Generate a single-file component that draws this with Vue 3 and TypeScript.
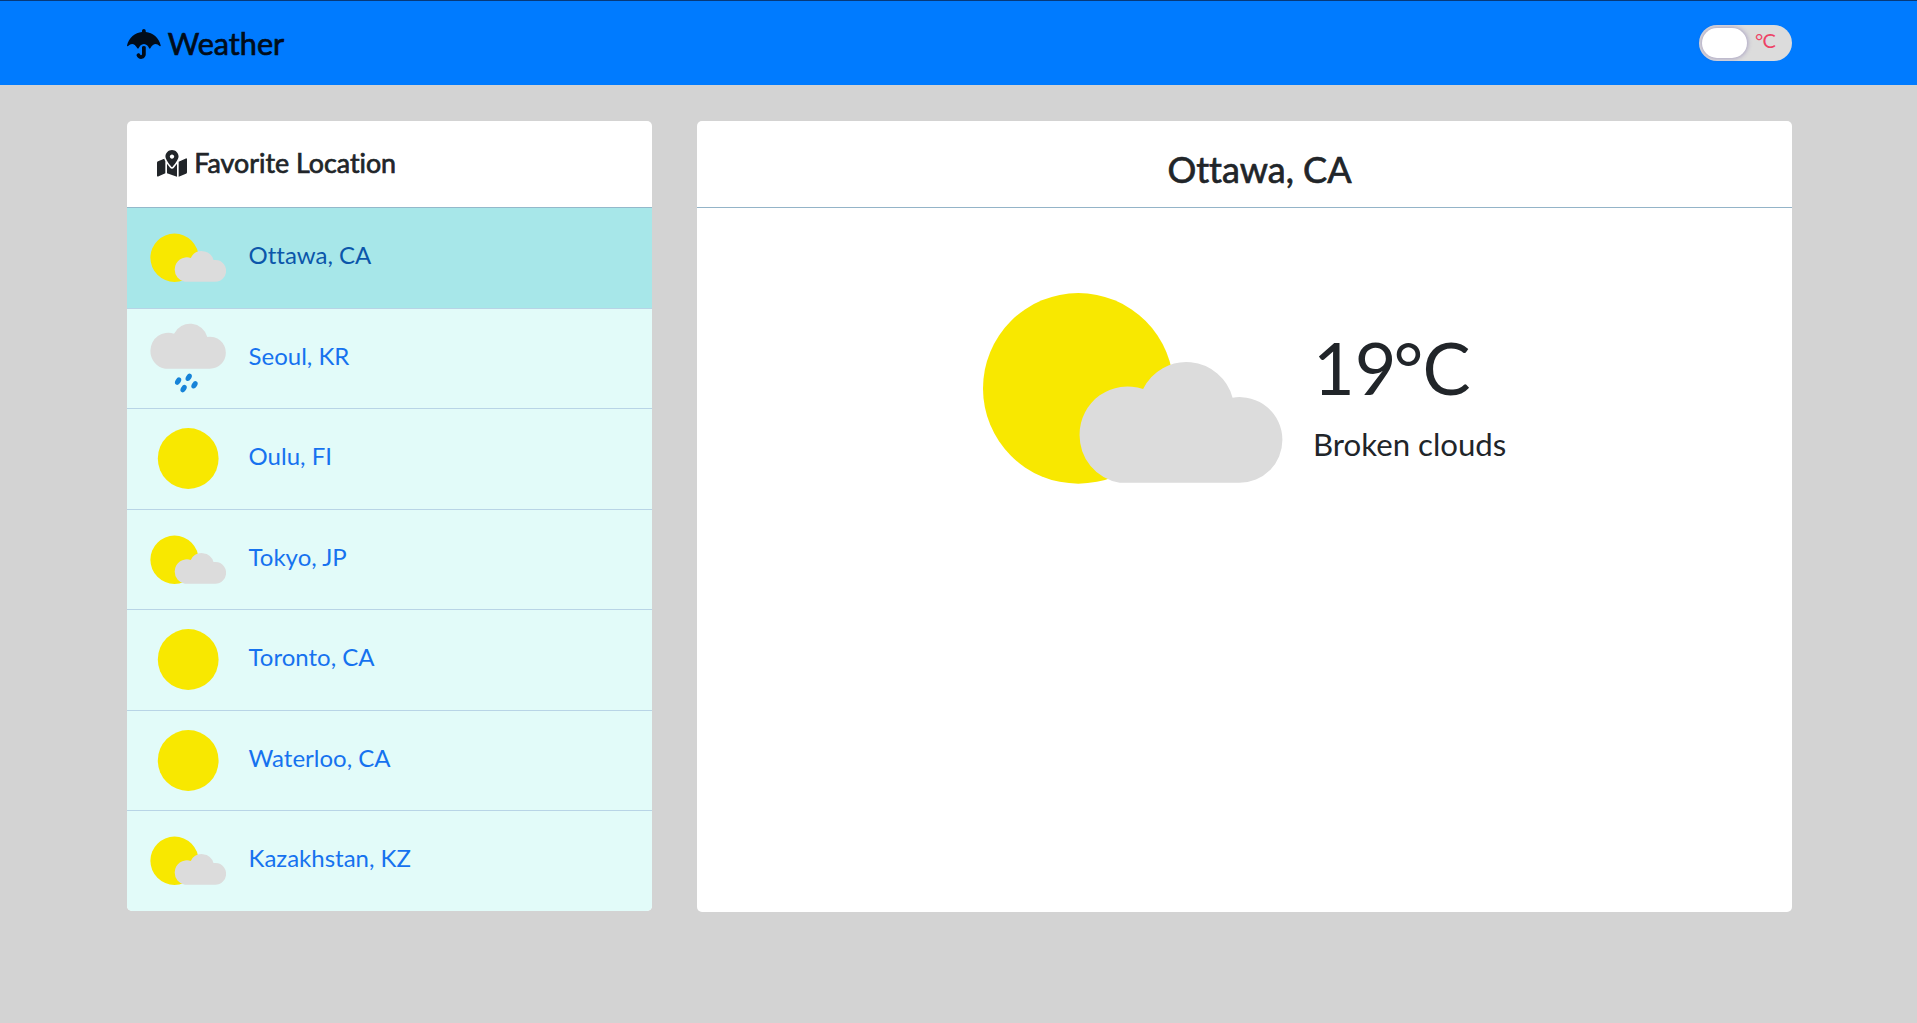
<script setup lang="ts">
type Weather = 'partly' | 'rain' | 'sun'

interface City {
  name: string
  weather: Weather
}

const cities: City[] = [
  { name: 'Ottawa, CA', weather: 'partly' },
  { name: 'Seoul, KR', weather: 'rain' },
  { name: 'Oulu, FI', weather: 'sun' },
  { name: 'Tokyo, JP', weather: 'partly' },
  { name: 'Toronto, CA', weather: 'sun' },
  { name: 'Waterloo, CA', weather: 'sun' },
  { name: 'Kazakhstan, KZ', weather: 'partly' },
]

const selected = cities[0]

// Cloud silhouette in a 203 x 121 box
const cloud =
  'M40 120.5A48 48 0 0 1 0 72A48 48 0 0 1 63.5 26.7A48 48 0 0 1 153 35.4A42.8 42.8 0 0 1 202.8 77.8A42.8 42.8 0 0 1 160 120.5H40Z'
</script>

<template>
  <div class="page">
    <header class="navbar">
      <div class="container bar">
        <h1 class="brand">
          <svg class="umbrella" viewBox="0 0 576 512">
            <path
              d="M575.7 280.8C547.1 144.5 437.3 62.6 320 49.9V32c0-17.7-14.3-32-32-32s-32 14.3-32 32v17.9C138.3 62.6 29.5 144.5.3 280.8c-2.2 10.1 8.5 21.3 18.7 11.4 52-55 107.7-52.4 158.6 37 5.3 9.5 14.9 8.6 19.7 0 20.2-35.4 44.9-73.2 90.7-73.2 58.5 0 88.2 68.8 90.7 73.2 4.8 8.6 14.4 9.5 19.7 0 51-89.5 107.1-91.4 158.6-37 10.3 10 20.9-1.3 18.7-11.4zM256 301.7V432c0 8.8-7.2 16-16 16-7.8 0-13.2-5.3-15.1-10.7-5.9-16.7-24.1-25.4-40.8-19.5-16.7 5.9-25.4 24.2-19.5 40.8 11.2 31.9 41.6 53.3 75.4 53.3 44.1 0 80-35.9 80-80V301.6c-9.1-7.9-19.8-13.6-32-13.6-12.3.1-22.4 4.8-32 13.7z"
            />
          </svg>
          <span>Weather</span>
        </h1>
        <button class="toggle" type="button">
          <span class="knob"></span>
          <span class="unit">°C</span>
        </button>
      </div>
    </header>

    <main class="container content">
      <section class="favorites">
        <h2 class="favorites-title">
          <svg class="map" viewBox="0 0 576 512">
            <path
              d="M288 0c-69.59 0-126 56.41-126 126 0 56.26 82.35 158.8 113.9 196.02 6.39 7.54 17.82 7.54 24.2 0C331.65 284.8 414 182.26 414 126 414 56.41 357.59 0 288 0zm0 168c-23.2 0-42-18.8-42-42s18.8-42 42-42 42 18.8 42 42-18.8 42-42 42zM20.12 215.95A32.006 32.006 0 0 0 0 245.66v250.32c0 11.32 11.43 19.06 21.94 14.86L160 448V214.92c-8.84-15.98-16.07-31.54-21.25-46.42L20.12 215.95zM288 359.67c-14.07 0-27.38-6.18-36.51-16.96-19.66-23.2-40.57-49.62-59.49-76.72v182l192 64V266c-18.92 27.09-39.82 53.52-59.49 76.72-9.13 10.77-22.44 16.95-36.51 16.95zm266.06-198.51L416 224v288l139.88-55.95A31.996 31.996 0 0 0 576 426.34V176.02c0-11.32-11.43-19.06-21.94-14.86z"
            />
          </svg>
          <span>Favorite Location</span>
        </h2>
        <ul class="list">
          <li
            v-for="city in cities"
            :key="city.name"
            class="row"
            :class="{ active: city === selected }"
          >
            <svg v-if="city.weather === 'partly'" class="icon" viewBox="0 0 300 300">
              <circle class="sun" cx="96.8" cy="149" r="95.3" />
              <path class="cloud" :d="cloud" transform="translate(97.6 122.9)" />
            </svg>
            <svg v-else-if="city.weather === 'rain'" class="icon" viewBox="0 0 76 76">
              <path class="cloud" :d="cloud" transform="translate(.4 2.8) scale(.372)" />
              <g class="drops">
                <ellipse cx="28.1" cy="60.1" rx="2.6" ry="4" transform="rotate(32 28.1 60.1)" />
                <ellipse cx="38.7" cy="56.3" rx="2.6" ry="4" transform="rotate(32 38.7 56.3)" />
                <ellipse cx="33.6" cy="67.6" rx="2.6" ry="4" transform="rotate(32 33.6 67.6)" />
                <ellipse cx="44.5" cy="63.8" rx="2.6" ry="4" transform="rotate(32 44.5 63.8)" />
              </g>
            </svg>
            <svg v-else class="icon" viewBox="0 0 76 76">
              <circle class="sun" cx="38.2" cy="37.5" r="30.4" />
            </svg>
            <a class="city">{{ city.name }}</a>
          </li>
        </ul>
      </section>

      <section class="detail">
        <h2 class="detail-title">{{ selected.name }}</h2>
        <div class="current">
          <svg class="hero" viewBox="0 0 300 191">
            <circle class="sun" cx="95.3" cy="95.4" r="95.3" />
            <path class="cloud" :d="cloud" transform="translate(96.6 69.3)" />
          </svg>
          <div class="reading">
            <div class="temperature">19<span class="degree">°</span>C</div>
            <div class="condition">Broken clouds</div>
          </div>
        </div>
      </section>
    </main>
  </div>
</template>

<style>
body {
  margin: 0;
  background: #d3d3d3;
}
</style>

<style scoped>
.page {
  min-height: 1023px;
  box-sizing: border-box;
  background: #d3d3d3;
  color: #212529;
  font-family: Lato, sans-serif;
  font-variant-ligatures: none;
}

.container {
  width: 1665px;
  margin-left: 127px;
}

.navbar {
  box-sizing: border-box;
  height: 85px;
  border-top: 1px solid #06397a;
  background: #007bff;
}

.bar {
  display: flex;
  align-items: flex-start;
  justify-content: space-between;
}

h1,
h2 {
  margin: 0;
  font-weight: 400;
  -webkit-text-stroke: 0.7px currentColor;
}

svg {
  display: block;
  flex: none;
}

.brand {
  display: flex;
  gap: 7px;
  padding-top: 25px;
  color: #000c1a;
  font-size: 30.6px;
  line-height: 36px;
}

.umbrella {
  width: 33.75px;
  height: 30px;
  margin-top: 3px;
  fill: currentColor;
  stroke: none;
}

.toggle {
  display: flex;
  box-sizing: border-box;
  width: 93px;
  height: 36px;
  margin: 24px 0 0;
  padding: 3px;
  border: 0;
  border-radius: 18px;
  background: #dcdcdc;
  font-family: inherit;
}

.knob {
  width: 45px;
  height: 30px;
  border-radius: 15px;
  background: #fff;
  box-shadow: 0 0 4px 1px rgba(80, 60, 150, 0.35);
}

.unit {
  margin-left: 8px;
  color: #ee4266;
  font-size: 20px;
  letter-spacing: -0.8px;
  line-height: 25px;
}

.content {
  display: flex;
  gap: 45px;
  align-items: flex-start;
  padding-top: 36px;
}

.favorites {
  width: 525px;
  height: 790px;
  overflow: hidden;
  border-radius: 5px;
  background: #fff;
}

.favorites-title {
  display: flex;
  box-sizing: border-box;
  gap: 7.3px;
  height: 87px;
  padding: 26px 0 0 30px;
  border-bottom: 1px solid #94b9cb;
  font-size: 26.8px;
  line-height: 32px;
}

.map {
  width: 30px;
  height: 26.7px;
  margin-top: 3px;
  fill: currentColor;
  stroke: none;
}

.list {
  margin: 0;
  padding: 0;
  list-style: none;
}

.row {
  display: flex;
  box-sizing: border-box;
  height: 100.4px;
  padding: 12px 0 0 23.4px;
  border-bottom: 1px solid #b8d4e6;
  background: #e2fbf9;
}

.row:first-child {
  height: 101px;
}

.row:last-child {
  border-bottom: 0;
}

.row.active {
  background: #a7e7e9;
}

.icon {
  width: 76px;
  height: 76px;
}

.sun {
  fill: #f8e800;
}

.cloud {
  fill: #dcdcdc;
}

.drops {
  fill: #1683d8;
}

.city {
  margin: 20px 0 0 22.2px;
  color: #1672ef;
  font-size: 24px;
  line-height: 30px;
}

.active .city {
  color: #0b56aa;
}

.detail {
  width: 1095px;
  height: 791px;
  border-radius: 5px;
  background: #fff;
}

.detail-title {
  box-sizing: border-box;
  height: 87px;
  padding: 26px 0 0 30px;
  border-bottom: 1px solid #94b4c8;
  font-size: 36px;
  line-height: 44px;
  text-align: center;
}

.current {
  display: flex;
  padding: 84.7px 0 0 286px;
}

.hero {
  width: 300px;
  height: 191px;
}

.reading {
  margin: 29px 0 0 30px;
}

.temperature {
  font-size: 72px;
  line-height: 90px;
}

.degree {
  margin: 0 -1px 0 -3px;
}

.condition {
  margin-top: 12px;
  font-size: 31.2px;
  line-height: 40px;
}
</style>
